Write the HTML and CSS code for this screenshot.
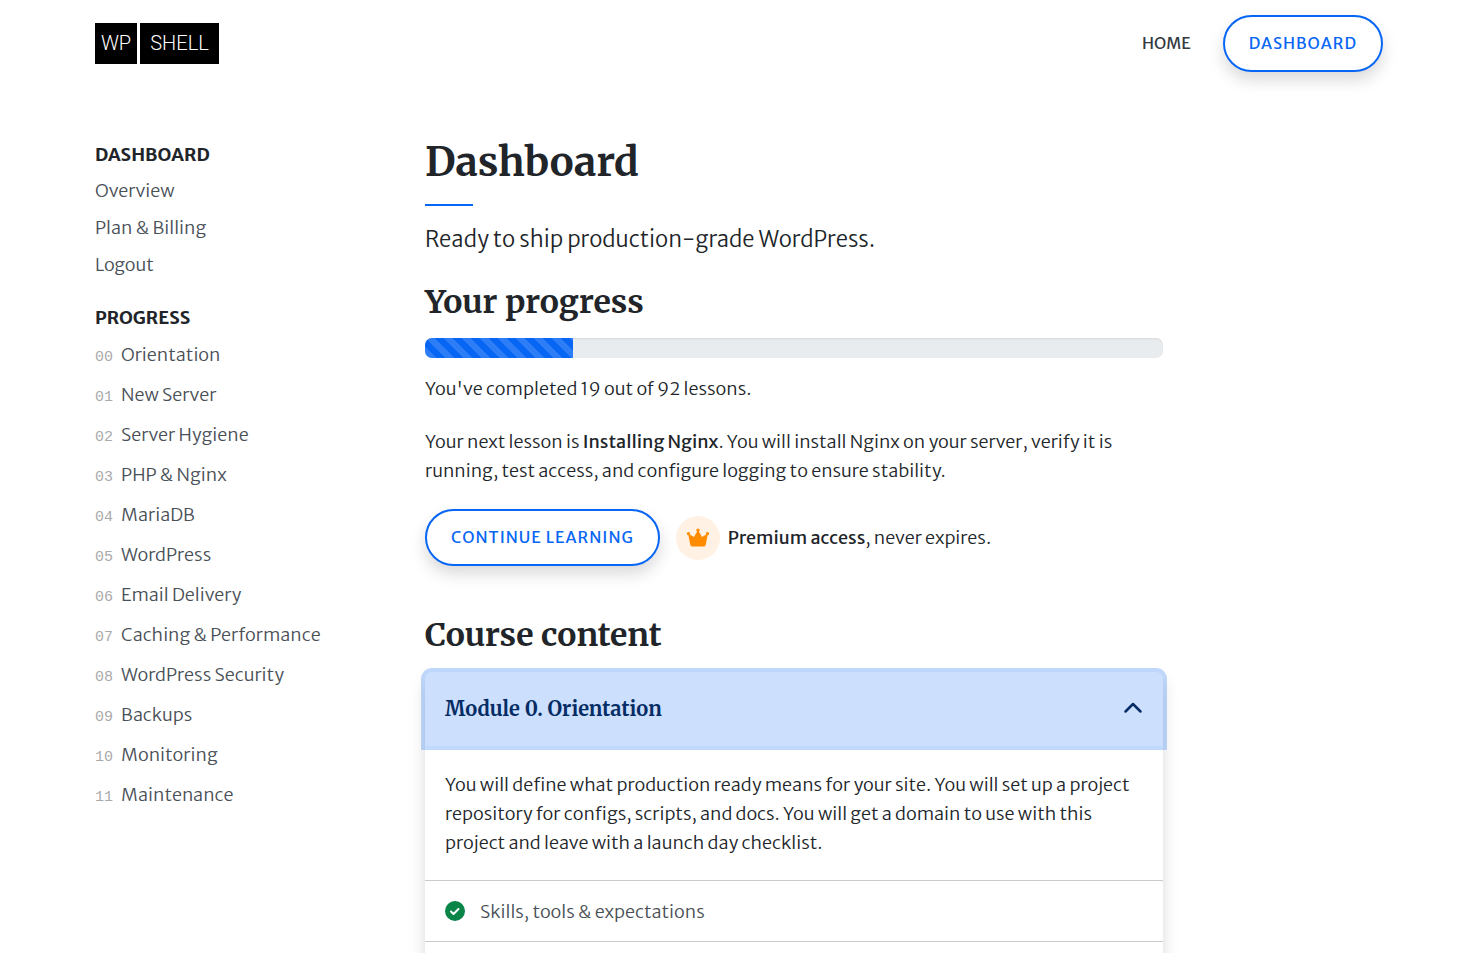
FILE: index.html
```html
<!DOCTYPE html>
<html lang="en">
<head>
<meta charset="utf-8">
<meta name="viewport" content="width=device-width, initial-scale=1">
<title>Dashboard – WP Shell</title>
<link rel="stylesheet" href="styles.css">
</head>
<body>
<header class="site-header">
  <a class="logo" href="#"><span class="logo-part logo-wp">WP</span><span class="logo-part logo-shell">SHELL</span></a>
  <nav class="top-nav">
    <a class="top-link" href="#">HOME</a>
    <a class="button" href="#">DASHBOARD</a>
  </nav>
</header>
<div class="layout">
  <aside class="sidebar">
    <h2 class="side-title">DASHBOARD</h2>
    <ul class="side-list">
      <li><a href="#">Overview</a></li>
      <li><a href="#">Plan &amp; Billing</a></li>
      <li><a href="#">Logout</a></li>
    </ul>
    <h2 class="side-title">PROGRESS</h2>
    <ul class="side-list modules">
      <li><span class="num">00</span><a href="#">Orientation</a></li>
      <li><span class="num">01</span><a href="#">New Server</a></li>
      <li><span class="num">02</span><a href="#">Server Hygiene</a></li>
      <li><span class="num">03</span><a href="#">PHP &amp; Nginx</a></li>
      <li><span class="num">04</span><a href="#">MariaDB</a></li>
      <li><span class="num">05</span><a href="#">WordPress</a></li>
      <li><span class="num">06</span><a href="#">Email Delivery</a></li>
      <li><span class="num">07</span><a href="#">Caching &amp; Performance</a></li>
      <li><span class="num">08</span><a href="#">WordPress Security</a></li>
      <li><span class="num">09</span><a href="#">Backups</a></li>
      <li><span class="num">10</span><a href="#">Monitoring</a></li>
      <li><span class="num">11</span><a href="#">Maintenance</a></li>
    </ul>
  </aside>
  <main class="main">
    <h1 class="page-title">Dashboard</h1>
    <p class="lead">Ready to ship production-grade WordPress.</p>
    <h2 class="section-title">Your progress</h2>
    <div class="progress" role="progressbar" aria-label="Course progress" aria-valuenow="20" aria-valuemin="0" aria-valuemax="100"><div class="progress-bar" style="width:20%"></div></div>
    <p class="text">You've completed 19 out of 92 lessons.</p>
    <p class="text">Your next lesson is <strong>Installing Nginx</strong>. You will install Nginx on your server, verify it is running, test access, and configure logging to ensure stability.</p>
    <div class="actions">
      <a class="button" href="#">CONTINUE LEARNING</a>
      <div class="premium">
        <span class="crown"><svg width="24" height="20" viewBox="0 0 24 20" aria-hidden="true"><path fill="#ff8c00" d="M4.200 16.500 2.400 7.200A1.500 1.500 0 1 1 3.700 6.600L8 9 11.100 3.500A1.600 1.600 0 1 1 12.900 3.500L16 9 20.300 6.600A1.500 1.500 0 1 1 21.600 7.200L19.800 16.500Q19.500 18.500 17.800 18.500H6.200Q4.500 18.500 4.200 16.500Z"/></svg></span>
        <p><strong>Premium access</strong>, never expires.</p>
      </div>
    </div>
    <h2 class="section-title course-title">Course content</h2>
    <section class="accordion">
      <h3 class="accordion-heading">
        <button class="accordion-button" type="button" aria-expanded="true" aria-controls="module-0">Module 0. Orientation
          <svg width="20" height="20" viewBox="0 0 16 16" aria-hidden="true"><path fill="none" stroke="#052c65" stroke-width="2" stroke-linecap="round" stroke-linejoin="round" d="m2 10 6-6 6 6"/></svg>
        </button>
      </h3>
      <div id="module-0">
        <p class="accordion-text">You will define what production ready means for your site. You will set up a project repository for configs, scripts, and docs. You will get a domain to use with this project and leave with a launch day checklist.</p>
        <ul class="lessons">
          <li><a href="#"><svg width="20" height="20" viewBox="0 0 20 20" aria-hidden="true"><circle cx="10" cy="10" r="10" fill="#0a8548"/><path d="m6 10.500 2.500 2.500 5-5" fill="none" stroke="#fff" stroke-width="2" stroke-linecap="round" stroke-linejoin="round"/></svg>Skills, tools &amp; expectations</a></li>
          <li class="lesson-next"></li>
        </ul>
      </div>
    </section>
  </main>
</div>
</body>
</html>
```
FILE: styles.css
```css
* { box-sizing: border-box; }
html, body { height: 100%; }
body {
  margin: 0;
  overflow: hidden;
  background: #fff;
  color: #212529;
  font-family: "Merriweather Sans", "Open Sans", sans-serif;
  font-size: 18px;
  font-weight: 300;
  line-height: 29px;
}
a { color: inherit; text-decoration: none; }
h1, h2, h3, p, ul { margin: 0; padding: 0; }
ul { list-style: none; }
strong { font-weight: 500; }

.site-header {
  display: flex;
  align-items: center;
  justify-content: space-between;
  padding: 15px 89px 0 95px;
}
.logo { display: flex; gap: 3px; color: #fff; font-family: Roboto, sans-serif; font-size: 20px; font-weight: 300; line-height: 41px; }
.logo-part { background: #000; text-align: center; }
.logo-wp { width: 42px; }
.logo-shell { width: 79px; }
.top-nav { display: flex; align-items: center; gap: 32px; }
.top-link { color: #343a40; font-size: 16px; font-weight: 400; }
.button {
  padding: 12px 24px;
  border: 2px solid #0866f5;
  border-radius: 29px;
  background: #fff;
  box-shadow: 0 8px 16px rgba(0, 0, 0, 0.15);
  color: #0866f5;
  font-size: 16px;
  font-weight: 400;
  letter-spacing: 1px;
}

.layout {
  display: grid;
  grid-template-columns: 330px minmax(0, 738px);
  padding: 66px 89px 0 95px;
}
.side-title { font-size: 18px; font-weight: 700; line-height: 34px; }
.side-list { margin-bottom: 18px; color: #495057; }
.side-list li { line-height: 37px; }
.side-list.modules li { display: flex; align-items: baseline; gap: 8px; line-height: 40px; }
.num { color: #aaa; font-family: "Liberation Mono", monospace; font-size: 15px; line-height: 16px; }

.page-title, .section-title, .accordion-button { font-family: Merriweather, "DejaVu Serif", serif; font-weight: 700; }
.page-title { font-size: 40px; line-height: 48px; }
.page-title::after { content: ""; display: block; width: 48px; height: 2px; margin-top: 18px; background: #0866f5; }
.lead { margin: 16px 0 24px; font-size: 22px; line-height: 34px; }
.section-title { font-size: 32px; line-height: 44px; }
.progress { height: 20px; margin: 14px 0 16px; overflow: hidden; border-radius: 7px; background: #e9ecef; box-shadow: inset 0 1px 2px rgba(0, 0, 0, 0.075); }
.progress-bar {
  height: 100%;
  background: #0866f5 linear-gradient(45deg, rgba(255,255,255,.15) 25%, transparent 25%, transparent 50%, rgba(255,255,255,.15) 50%, rgba(255,255,255,.15) 75%, transparent 75%) 0 0 / 18px 18px;
}
.text { margin-bottom: 24px; }
.actions { display: flex; align-items: center; gap: 16px; }
.premium { display: flex; align-items: center; gap: 8px; }
.crown { display: flex; align-items: center; justify-content: center; width: 44px; height: 44px; border-radius: 50%; background: #fff1e3; }
.course-title { margin-top: 47px; }

.accordion { margin-top: 15px; border-radius: 7px; box-shadow: 0 8px 16px rgba(0, 0, 0, 0.15); }
.accordion-button {
  display: flex;
  align-items: center;
  justify-content: space-between;
  width: 100%;
  padding: 20px;
  border: 0;
  border-radius: 7px 7px 0 0;
  background: #cce0fd;
  box-shadow: 0 0 0 4px rgba(8, 102, 245, 0.25);
  color: #052c65;
  font-size: 20px;
  line-height: 34px;
}
.accordion-text { padding: 24px 20px 23px; }
.lessons li { border-top: 1px solid #c8cacc; }
.lessons a { display: flex; align-items: center; gap: 15px; min-height: 60px; padding: 0 20px; color: #495057; }
.lesson-next { min-height: 61px; }
```
